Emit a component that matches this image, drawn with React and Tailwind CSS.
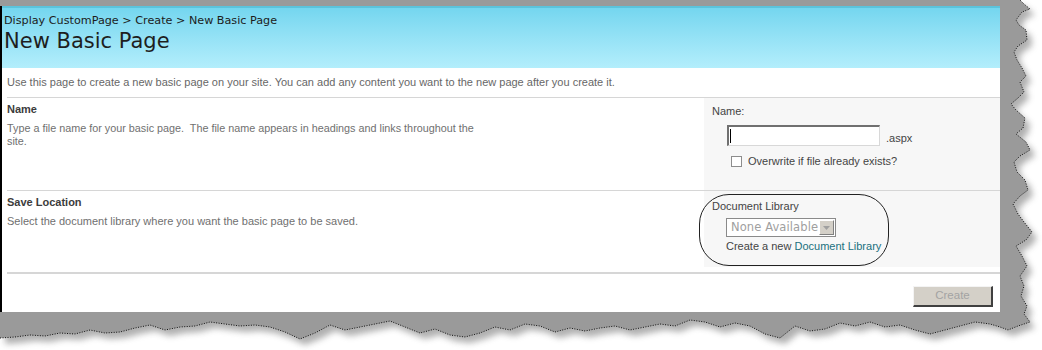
import React from "react";

const rightEdge = [
  [1020,0],[1024,4],[1030,9],[1022,12],[1016,20],[1019,25],[1026,30],[1027,40],[1018,46],[1014,52],[1017,60],[1022,68],[1026,76],[1020,82],[1024,92],[1018,98],[1011,104],[1016,110],[1025,118],[1023,128],[1016,134],[1026,142],[1030,150],[1020,156],[1014,162],[1017,172],[1025,180],[1028,190],[1020,196],[1013,204],[1018,214],[1024,222],[1032,232],[1026,240],[1016,246],[1022,256],[1027,266],[1020,276],[1024,286],[1021,296],[1027,306],[1024,314],[1030,322],[1018,326],[1008,330]
];
const bottomEdge = [
  [1000,327],[990,324],[975,322],[960,326],[945,330],[930,334],[915,330],[900,325],[885,327],[870,322],[855,326],[840,323],[825,329],[810,331],[795,326],[780,338],[765,334],[750,326],[735,323],[720,327],[705,322],[690,320],[675,326],[660,324],[645,327],[630,330],[615,326],[600,328],[585,331],[570,328],[555,332],[540,326],[525,324],[510,330],[495,327],[480,333],[465,337],[450,335],[435,329],[420,333],[405,327],[390,321],[375,324],[360,327],[345,330],[330,325],[315,333],[300,339],[285,332],[270,327],[255,325],[240,326],[225,324],[210,322],[195,326],[180,327],[165,330],[150,325],[135,328],[120,332],[105,333],[90,330],[75,334],[60,333],[45,336],[30,335],[15,337],[0,338]
];
const edgePts = [...rightEdge, ...bottomEdge];
const polyPts = [[0, 0], ...edgePts].map((p) => p.join(",")).join(" ");
const edgeLine = edgePts.map((p) => p.join(",")).join(" ");

function TornEdge() {
  return (
    <svg className="absolute left-0 top-0" width="1042" height="350" viewBox="0 0 1042 350">
      <defs>
        <filter id="blur" x="-10%" y="-10%" width="120%" height="130%">
          <feGaussianBlur stdDeviation="3" />
        </filter>
      </defs>
      <polygon points={polyPts} fill="#6f6f6f" opacity="0.55" transform="translate(5,6)" filter="url(#blur)" />
      <polygon points={polyPts} fill="#9a9a9a" />
      <polyline points={edgeLine} fill="none" stroke="#111" strokeWidth="1" strokeDasharray="1 1.5" />
    </svg>
  );
}

const body = { fontFamily: '"Liberation Sans", Arial, sans-serif' };
const verdana = { fontFamily: '"DejaVu Sans", Verdana, sans-serif' };

export default function App() {
  return (
    <div className="relative w-[1042px] h-[350px] bg-white overflow-hidden" style={body}>
      <TornEdge />
      <div className="relative w-[1000px] pt-[6px]">
        <div className="h-[306px] border-l-2 border-black bg-white flex flex-col">
          {/* Header */}
          <div className="h-[62px] border-t-2 border-[#5cc3db] bg-gradient-to-b from-[#74d6ef] to-[#b3eefc] pl-[2px] pt-[6px]" style={verdana}>
            <div className="text-[11.2px] leading-[13px] text-[#1c1c1c]">Display CustomPage &gt; Create &gt; New Basic Page</div>
            <div className="mt-[2px] text-[21px] leading-[25px] text-[#1e1e1e]">New Basic Page</div>
          </div>

          {/* Intro */}
          <div className="h-[29px] pl-[5px] pt-[8px] text-[11px] leading-[13px] text-[#676767]">
            Use this page to create a new basic page on your site. You can add any content you want to the new page after you create it.
          </div>
          <div className="ml-[5px] h-px bg-[#d6d6d6]" />

          {/* Name section */}
          <div className="flex h-[92px]">
            <div className="w-[702px] pl-[5px] pt-[5px]">
              <div className="text-[11px] leading-[13px] font-bold text-[#3c3c3c]">Name</div>
              <div className="mt-[6px] text-[10.8px] leading-[13px] text-[#707070]">
                Type a file name for your basic page.&nbsp; The file name appears in headings and links throughout the
                <br />
                site.
              </div>
            </div>
            <div className="flex-1 bg-[#f7f7f7] pl-[8px] pt-[7px] text-[11px] leading-[13px] text-[#444]">
              <div>Name:</div>
              <div className="mt-[7px] ml-[15px] flex items-end">
                <div className="w-[153px] h-[21px] bg-white border-t-2 border-l-2 border-[#707070] border-b border-r border-b-[#d8d8d8] border-r-[#d8d8d8] pl-[1px] pt-[2px]">
                  <div className="w-px h-[14px] bg-black" />
                </div>
                <span className="ml-[6px] mb-[1px]">.aspx</span>
              </div>
              <div className="mt-[9px] ml-[19px] flex items-center">
                <div className="w-[11px] h-[11px] bg-white border border-[#8d8d8d]" />
                <span className="ml-[6px]">Overwrite if file already exists?</span>
              </div>
            </div>
          </div>
          <div className="ml-[5px] h-px bg-[#d6d6d6]" />

          {/* Save location section */}
          <div className="flex h-[76px]">
            <div className="w-[702px] pl-[5px] pt-[5px]">
              <div className="text-[11px] leading-[13px] font-bold text-[#3c3c3c]">Save Location</div>
              <div className="mt-[6px] text-[11px] leading-[13px] text-[#707070]">
                Select the document library where you want the basic page to be saved.
              </div>
            </div>
            <div className="flex-1 bg-[#f7f7f7] pl-[8px] pt-[9px] text-[11px] leading-[13px] text-[#444]">
              <div>Document Library</div>
              <div className="mt-[5px] ml-[14px] w-[110px] h-[19px] flex items-center bg-white border border-[#8a8a8a] overflow-hidden">
                <span className="flex-1 pl-[4px] whitespace-nowrap text-[11.5px] leading-[17px] tracking-[0.1px] text-[#a0a0a0]" style={verdana}>None Available</span>
                <div className="w-[15px] h-[15px] shrink-0 mr-[1px] bg-[#d4d0c8] border border-t-white border-l-white border-b-[#808080] border-r-[#808080] flex items-center justify-center">
                  <svg width="7" height="4" viewBox="0 0 7 4"><path d="M0 0h7L3.5 4z" fill="#a0a0a0" /></svg>
                </div>
              </div>
              <div className="mt-[3px] ml-[14px]">
                Create a new <span className="text-[#20707e]">Document Library</span>
              </div>
            </div>
          </div>
          <div className="h-[5px]" />
          <div className="ml-[5px] h-[2px] bg-[#d6d6d6]" />

          {/* Footer */}
          <div className="flex justify-end pr-[7px] pt-[12px]">
            <div className="w-[80px] h-[21px] bg-[#d4d0c8] border-t border-l border-t-[#f4f4f4] border-l-[#f4f4f4] border-b-2 border-r-2 border-b-[#404040] border-r-[#404040] flex items-center justify-center text-[11.5px] text-[#a3a3a3]">
              Create
            </div>
          </div>
        </div>
      </div>

      {/* hand-drawn annotation oval */}
      <div className="absolute left-[699px] top-[194px] w-[190px] h-[72px] rounded-[30px] border-[1.5px] border-[#222]" />
    </div>
  );
}
